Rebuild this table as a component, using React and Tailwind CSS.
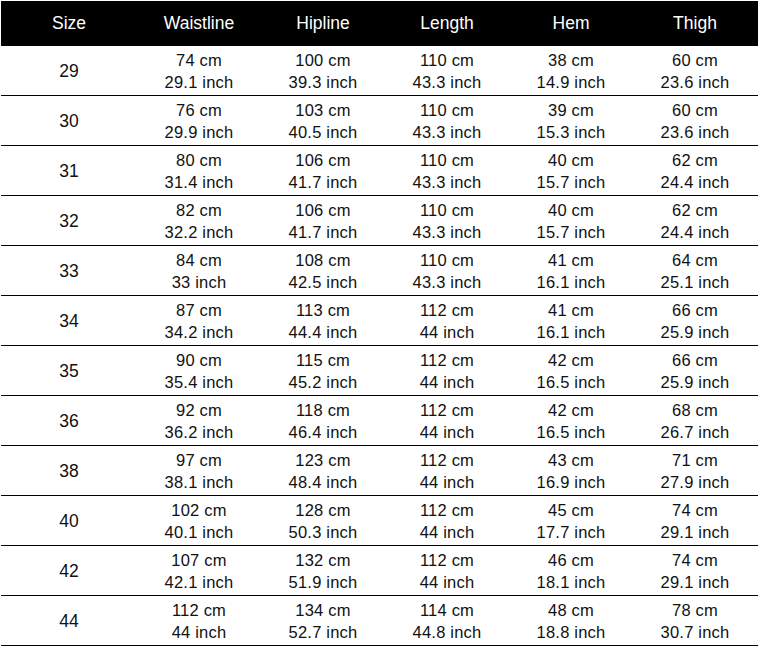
const HEADERS = ['Size', 'Waistline', 'Hipline', 'Length', 'Hem', 'Thigh']

const ROWS = [
  ['29', [74, '29.1'], [100, '39.3'], [110, '43.3'], [38, '14.9'], [60, '23.6']],
  ['30', [76, '29.9'], [103, '40.5'], [110, '43.3'], [39, '15.3'], [60, '23.6']],
  ['31', [80, '31.4'], [106, '41.7'], [110, '43.3'], [40, '15.7'], [62, '24.4']],
  ['32', [82, '32.2'], [106, '41.7'], [110, '43.3'], [40, '15.7'], [62, '24.4']],
  ['33', [84, '33'], [108, '42.5'], [110, '43.3'], [41, '16.1'], [64, '25.1']],
  ['34', [87, '34.2'], [113, '44.4'], [112, '44'], [41, '16.1'], [66, '25.9']],
  ['35', [90, '35.4'], [115, '45.2'], [112, '44'], [42, '16.5'], [66, '25.9']],
  ['36', [92, '36.2'], [118, '46.4'], [112, '44'], [42, '16.5'], [68, '26.7']],
  ['38', [97, '38.1'], [123, '48.4'], [112, '44'], [43, '16.9'], [71, '27.9']],
  ['40', [102, '40.1'], [128, '50.3'], [112, '44'], [45, '17.7'], [74, '29.1']],
  ['42', [107, '42.1'], [132, '51.9'], [112, '44'], [46, '18.1'], [74, '29.1']],
  ['44', [112, '44'], [134, '52.7'], [114, '44.8'], [48, '18.8'], [78, '30.7']],
]

export default function App() {
  return (
    <div className="w-[758px] h-[646px] bg-white pt-px pl-px font-['Liberation_Sans',Arial,sans-serif] text-[#111]">
      <div className="flex h-[45px] items-center bg-black text-[17.5px] text-white">
        {HEADERS.map((h, i) => (
          <div key={h} className={`${i === 0 ? 'w-[136px]' : 'w-[124px]'} text-center`}>
            {h}
          </div>
        ))}
      </div>

      {ROWS.map(([size, ...cells]) => (
        <div key={size} className="flex h-[50px] items-center border-b border-black pt-px">
          <div className="w-[136px] text-center text-[17.5px]">{size}</div>
          {cells.map(([cm, inch], i) => (
            <div key={i} className="w-[124px] text-center text-[16.5px] leading-[22px] tracking-[0.2px]">
              <div>{cm} cm</div>
              <div>{inch} inch</div>
            </div>
          ))}
        </div>
      ))}
    </div>
  )
}
